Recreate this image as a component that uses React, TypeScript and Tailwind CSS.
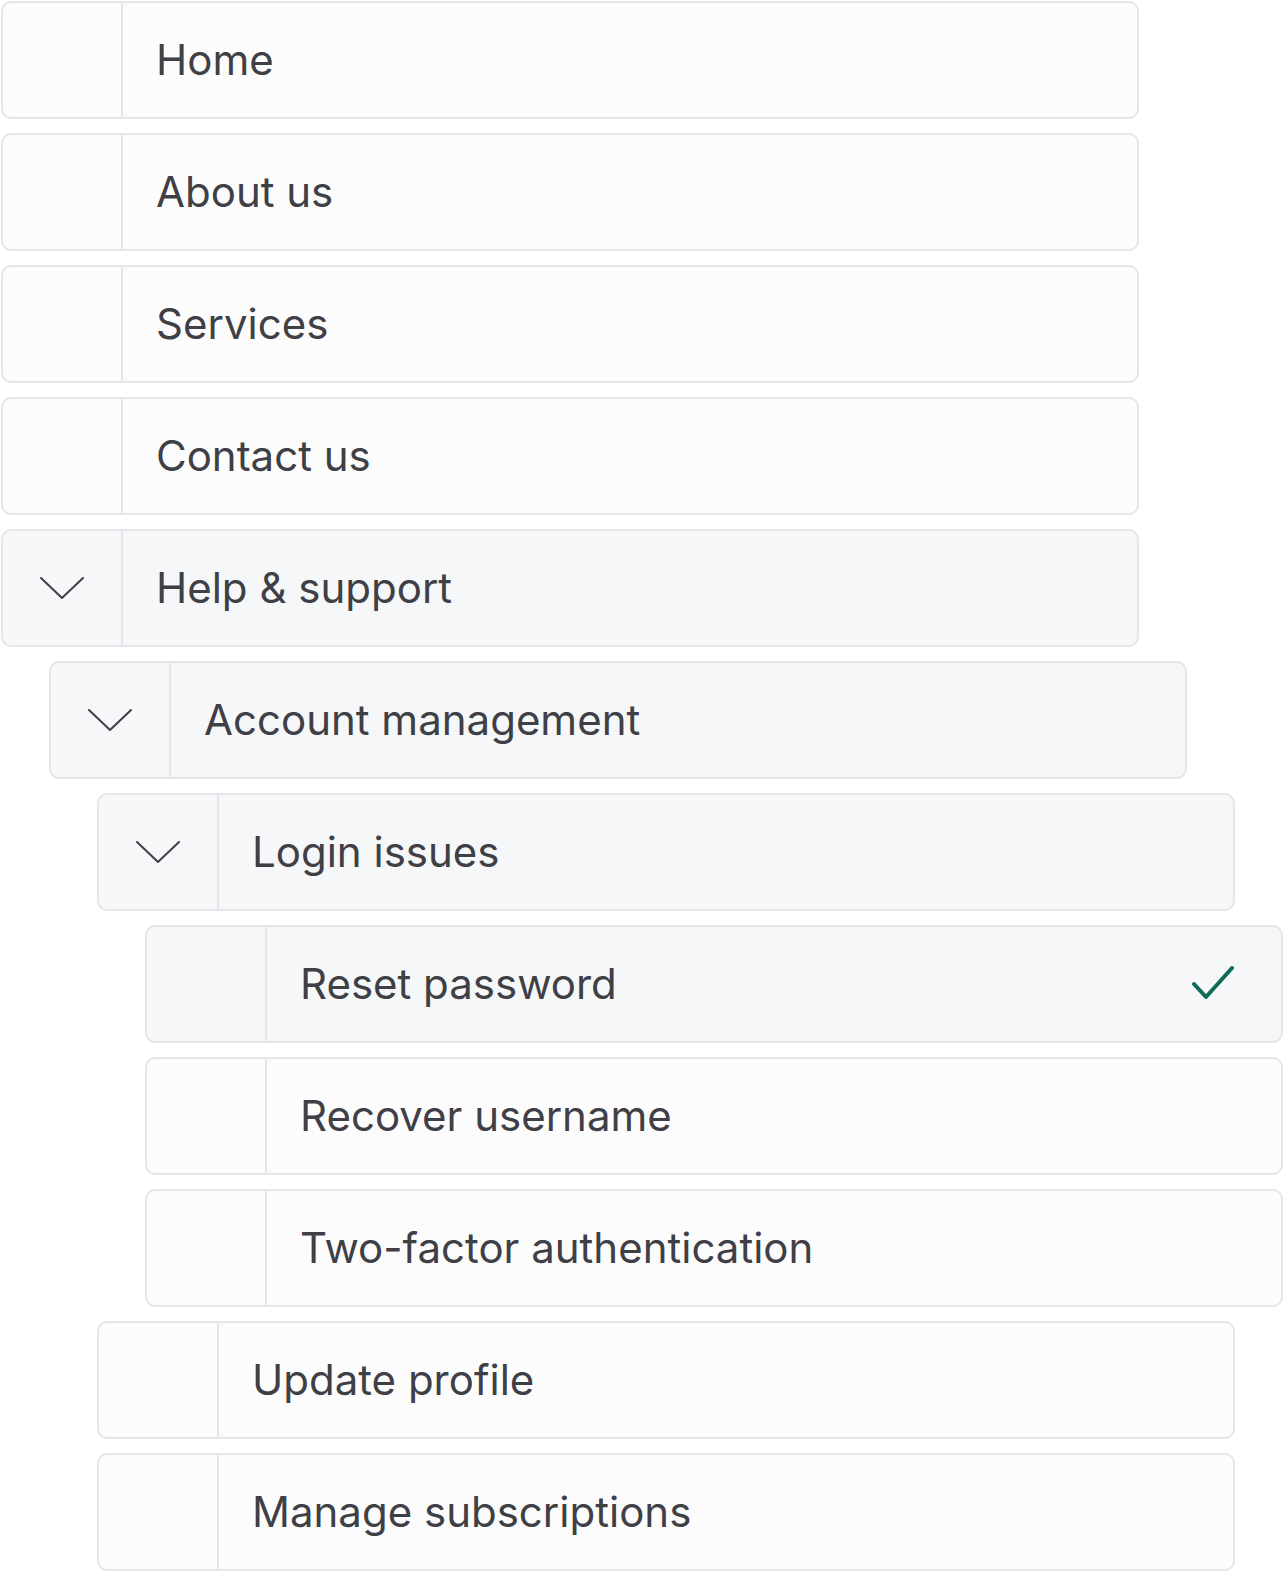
import React from 'react';

type Item = {
  label: string;
  level: number;
  expanded?: boolean;
  selected?: boolean;
};

const items: Item[] = [
  { label: 'Home', level: 0 },
  { label: 'About us', level: 0 },
  { label: 'Services', level: 0 },
  { label: 'Contact us', level: 0 },
  { label: 'Help & support', level: 0, expanded: true },
  { label: 'Account management', level: 1, expanded: true },
  { label: 'Login issues', level: 2, expanded: true },
  { label: 'Reset password', level: 3, selected: true },
  { label: 'Recover username', level: 3 },
  { label: 'Two-factor authentication', level: 3 },
  { label: 'Update profile', level: 2 },
  { label: 'Manage subscriptions', level: 2 },
];

const indent = ['ml-0', 'ml-[48px]', 'ml-[96px]', 'ml-[144px]'];

function Chevron() {
  return (
    <svg width="44" height="24" viewBox="0 0 44 24" fill="none" className="text-[#3f3f46]">
      <path d="M1 2 L22 22 L43 2" stroke="currentColor" strokeWidth="2" strokeLinecap="round" strokeLinejoin="round" />
    </svg>
  );
}

function Check() {
  return (
    <svg width="44" height="38" viewBox="0 0 44 38" fill="none" className="text-[#0f6b57]">
      <path d="M3 19 L15 32 L41 3" stroke="currentColor" strokeWidth="4" strokeLinecap="round" strokeLinejoin="round" />
    </svg>
  );
}

function Row({ item }: { item: Item }) {
  const tinted = item.expanded || item.selected;
  return (
    <div
      className={`flex h-[118px] w-[1138px] shrink-0 items-stretch rounded-[10px] border-2 border-[#e6e6ea] ${
        tinted ? 'bg-[#f5f7f9]' : 'bg-[#fcfcfd]'
      } ${indent[item.level]}`}
    >
      {/* Toggle cell */}
      <div className="flex w-[120px] shrink-0 items-center justify-center border-r-2 border-[#e6e6ea]">
        {item.expanded && <Chevron />}
      </div>

      {/* Label */}
      <div className="flex flex-1 items-center justify-between pl-[33px] pr-[46px]">
        <span className="text-[42px] leading-none text-[#3f3f46]">{item.label}</span>
        {item.selected && <Check />}
      </div>
    </div>
  );
}

export default function App() {
  return (
    <div
      className="min-h-screen bg-white p-px"
      style={{ fontFamily: 'Inter, "Noto Sans", sans-serif' }}
    >
      <div className="flex flex-col gap-[14px]">
        {items.map((item) => (
          <Row key={item.label} item={item} />
        ))}
      </div>
    </div>
  );
}
